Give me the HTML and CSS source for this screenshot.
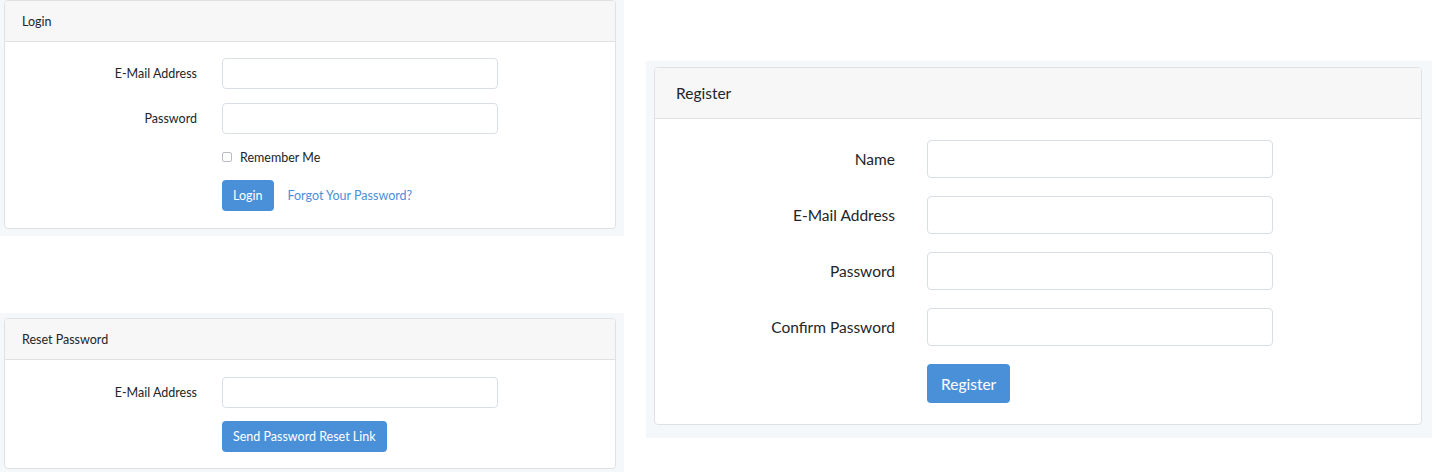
FILE: index.html
```html
<!DOCTYPE html>
<html>
<head>
    <link rel="stylesheet" href="styles.css">
</head>

<body>

<div class="page">

    <div class="col-left">

        <!-- LOGIN -->
        <div class="shot shot-login">
            <div class="card">
                <div class="card-header">Login</div>
                <div class="card-body">
                    <div class="form-grid">
                        <label class="field-label">E-Mail Address</label>
                        <input class="field-input" type="text">

                        <label class="field-label">Password</label>
                        <input class="field-input" type="password">

                        <div class="field-offset check-row">
                            <span class="check-box"></span>
                            <span>Remember Me</span>
                        </div>

                        <div class="field-offset btn-row">
                            <button class="btn">Login</button>
                            <a class="link" href="#">Forgot Your Password?</a>
                        </div>
                    </div>
                </div>
            </div>
        </div>

        <!-- RESET -->
        <div class="shot shot-reset">
            <div class="card">
                <div class="card-header">Reset Password</div>
                <div class="card-body">
                    <div class="form-grid">
                        <label class="field-label">E-Mail Address</label>
                        <input class="field-input" type="text">

                        <div class="field-offset btn-row">
                            <button class="btn">Send Password Reset Link</button>
                        </div>
                    </div>
                </div>
            </div>
        </div>

    </div>

    <!-- REGISTER -->
    <div class="shot shot-register">
        <div class="card">
            <div class="card-header">Register</div>
            <div class="card-body">
                <div class="form-grid">
                    <label class="field-label">Name</label>
                    <input class="field-input" type="text">

                    <label class="field-label">E-Mail Address</label>
                    <input class="field-input" type="text">

                    <label class="field-label">Password</label>
                    <input class="field-input" type="password">

                    <label class="field-label">Confirm Password</label>
                    <input class="field-input" type="password">

                    <div class="field-offset btn-row">
                        <button class="btn">Register</button>
                    </div>
                </div>
            </div>
        </div>
    </div>

</div>

</body>
</html>
```

FILE: styles.css
```css
body {
    margin: 0;
    background: #fff;
    font-family: Lato, "Noto Sans", sans-serif;
    color: #212529;
}

.page {
    display: flex;
    align-items: flex-start;
}

.col-left {
    display: flex;
    flex-direction: column;
    width: 624px;
}

.shot {
    background-color: #f5f8fa;
    box-sizing: border-box;
}

.card {
    background-color: #fff;
    border: 1px solid #dfe1e3;
    border-radius: 4px;
    overflow: hidden;
}

.card-header {
    box-sizing: border-box;
    background-color: #f7f7f7;
    border-bottom: 1px solid #dfe1e3;
    display: flex;
    align-items: center;
}

.form-grid {
    display: grid;
    align-items: center;
}

.field-label {
    text-align: right;
}

.field-input {
    box-sizing: border-box;
    width: 100%;
    margin: 0;
    border: 1px solid #d9dee4;
    border-radius: 4px;
    background: #fff;
    outline: none;
}

.field-offset {
    grid-column: 2;
}

.check-row {
    display: flex;
    align-items: center;
    gap: 8px;
    height: 18px;
}

.check-box {
    box-sizing: border-box;
    width: 10px;
    height: 10px;
    border: 1px solid #b9bdc1;
    border-radius: 2px;
    background: #fff;
}

.btn-row {
    display: flex;
    align-items: center;
}

.btn {
    box-sizing: border-box;
    border: none;
    border-radius: 4px;
    background-color: #4a90d9;
    color: #fff;
    font-family: inherit;
    font-size: inherit;
    cursor: pointer;
}

.link {
    color: #4a90d9;
    text-decoration: none;
}

/* left screenshots (smaller scale) */
.shot-login,
.shot-reset {
    font-size: 12.5px;
    padding: 0 8px 7px 4px;
}

.shot-login .card-header,
.shot-reset .card-header {
    height: 41px;
    padding-left: 17px;
}

.shot-login .card-body,
.shot-reset .card-body {
    padding: 16px 0 17px 0;
}

.shot-login .form-grid,
.shot-reset .form-grid {
    grid-template-columns: 192px 276px;
    column-gap: 25px;
    row-gap: 14px;
}

.shot-login .field-input,
.shot-reset .field-input {
    height: 31px;
}

.shot-login .btn,
.shot-reset .btn {
    height: 31px;
    padding: 0 11px;
}

.shot-login .link {
    margin-left: 14px;
}

.shot-reset {
    margin-top: 77px;
    padding-top: 5px;
    padding-bottom: 3px;
}

.shot-reset .card-body {
    padding-top: 17px;
    padding-bottom: 16px;
}

.shot-reset .form-grid {
    row-gap: 13px;
}

/* register screenshot (larger scale) */
.shot-register {
    font-size: 15.5px;
    width: 786px;
    margin-left: 22px;
    margin-top: 61px;
    padding: 6px 10px 13px 8px;
}

.shot-register .card-header {
    height: 51px;
    padding-left: 21px;
}

.shot-register .card-body {
    padding: 21px 0 21px 0;
}

.shot-register .form-grid {
    grid-template-columns: 240px 346px;
    column-gap: 32px;
    row-gap: 18px;
}

.shot-register .field-input {
    height: 38px;
}

.shot-register .btn {
    height: 39px;
    padding: 0 14px;
}
```
